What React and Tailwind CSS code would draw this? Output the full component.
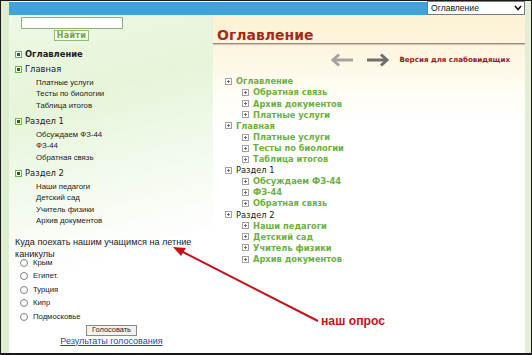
import React from "react";

const sans = { fontFamily: '"DejaVu Sans", Verdana, sans-serif' };
const arial = { fontFamily: '"Liberation Sans", Arial, sans-serif' };

function SideIcon() {
  return (
    <span className="inline-flex w-[7px] h-[7px] border border-[#6fb24a] bg-[#f4faef] items-center justify-center mr-[3px] shrink-0">
      <span className="w-[3px] h-[3px] bg-[#3c5a30]" />
    </span>
  );
}

function TreeIcon() {
  return (
    <svg width="7" height="7" viewBox="0 0 7 7" className="shrink-0 mr-[4px]">
      <rect x="0.5" y="0.5" width="6" height="6" fill="#fff" stroke="#a0a0a0" />
      <path d="M2 3.5H5M3.5 2V5" stroke="#707070" strokeWidth="1" />
    </svg>
  );
}

function Arrow({ dir, color }) {
  return (
    <svg width="24" height="14" viewBox="0 0 24 14">
      {dir === "left" ? (
        <g stroke={color} strokeWidth="3" fill="none" strokeLinecap="butt" strokeLinejoin="miter">
          <path d="M3 7H23" />
          <path d="M9 1.5L3 7L9 12.5" />
        </g>
      ) : (
        <g stroke={color} strokeWidth="3" fill="none" strokeLinecap="butt" strokeLinejoin="miter">
          <path d="M1 7H21" />
          <path d="M15 1.5L21 7L15 12.5" />
        </g>
      )}
    </svg>
  );
}

const sideMenu = [
  { title: "Главная", items: ["Платные услуги", "Тесты по биологии", "Таблица итогов"] },
  { title: "Раздел 1", items: ["Обсуждаем ФЗ-44", "ФЗ-44", "Обратная связь"] },
  { title: "Раздел 2", items: ["Наши педагоги", "Детский сад", "Учитель физики", "Архив документов"] },
];

const tree = [
  { t: "Оглавление", l: 0, g: true },
  { t: "Обратная связь", l: 1, g: true },
  { t: "Архив документов", l: 1, g: true },
  { t: "Платные услуги", l: 1, g: true },
  { t: "Главная", l: 0, g: true },
  { t: "Платные услуги", l: 1, g: true },
  { t: "Тесты по биологии", l: 1, g: true },
  { t: "Таблица итогов", l: 1, g: true },
  { t: "Раздел 1", l: 0, g: false },
  { t: "Обсуждаем ФЗ-44", l: 1, g: true },
  { t: "ФЗ-44", l: 1, g: true },
  { t: "Обратная связь", l: 1, g: true },
  { t: "Раздел 2", l: 0, g: false },
  { t: "Наши педагоги", l: 1, g: true },
  { t: "Детский сад", l: 1, g: true },
  { t: "Учитель физики", l: 1, g: true },
  { t: "Архив документов", l: 1, g: true },
];

const options = ["Крым", "Египет.", "Турция", "Кипр", "Подмосковье"];

export default function App() {
  return (
    <div className="relative w-[532px] h-[355px] overflow-hidden bg-white border-t border-l border-r border-[#1a1a1a] border-b-2 flex" style={sans}>
      {/* left strip */}
      <div className="w-[8px] h-full bg-[#dcefcf]" />

      {/* main */}
      <div className="flex-1 flex flex-col min-w-0">
        {/* top bar */}
        <div className="h-[14px] flex items-start">
          <div className="mt-[1px] h-[13px] flex-1 bg-[#3fa2df] flex justify-end items-start">
            <div className="-mt-[1px] w-[98px] h-[14px] bg-white border border-[#7a7a7a] flex items-center justify-between pl-[3px] pr-[2px]" style={arial}>
              <span className="text-[8.6px] leading-none text-[#111]">Оглавление</span>
              <svg width="8" height="6" viewBox="0 0 8 6">
                <path d="M1 1L4 4.5L7 1" stroke="#111" strokeWidth="1.6" fill="none" />
              </svg>
            </div>
          </div>
        </div>

        <div className="flex flex-1 min-h-0">
          {/* sidebar */}
          <div className="w-[204px] h-full bg-[linear-gradient(165deg,#eef8e5_0%,#e6f5da_25%,#ffffff_70%)] flex flex-col">
            <div className="pl-[7px] pt-[2px] w-[118px] flex flex-col items-center">
              <div className="w-[102px] h-[12px] bg-white border border-[#8fb07a]" />
              <div className="mt-[1px] h-[11px] px-[2px] border border-[#8cc06a] bg-[#f7fbf2] flex items-center">
                <span className="text-[8px] leading-none font-bold text-[#6aa84a] tracking-[0.3px]">Найти</span>
              </div>
            </div>

            <div className="pl-[6px] mt-[6px] flex flex-col">
              <div className="h-[14px] flex items-center">
                <SideIcon />
                <span className="text-[8.4px] font-bold text-[#1a1a1a] leading-none">Оглавление</span>
              </div>
              {sideMenu.map((s, i) => (
                <div key={i} className="mt-[1px] mb-[1.5px]">
                  <div className="h-[14px] flex items-center">
                    <SideIcon />
                    <span className="text-[8.4px] text-[#1a1a1a] leading-none">{s.title}</span>
                  </div>
                  <div className="pt-[1px] pl-[21px] flex flex-col" style={arial}>
                    {s.items.map((it, j) => (
                      <div key={j} className="h-[11.5px] flex items-center text-[7.8px] text-[#222] leading-none">
                        {it}
                      </div>
                    ))}
                  </div>
                </div>
              ))}
            </div>

            {/* poll */}
            <div className="mt-[7px] pl-[6px] pr-[14px]" style={arial}>
              <div className="text-[9.1px] leading-[12px] text-[#222]">
                Куда поехать нашим учащимся на летние каникулы
              </div>
              <div className="-mt-[3.5px] pl-[5px] flex flex-col">
                {options.map((o, i) => (
                  <div key={i} className="h-[13.5px] flex items-center">
                    <span className="w-[8px] h-[8px] rounded-full border border-[#808080] bg-white mr-[5px]" />
                    <span className="text-[7.7px] text-[#222] leading-none">{o}</span>
                  </div>
                ))}
              </div>
              <div className="mt-[1px] flex flex-col items-center w-[193px]">
                <div className="w-[51px] h-[11px] border border-[#8a8a8a] bg-[#f2f2f2] flex items-center justify-center">
                  <span className="text-[7.4px] leading-none text-[#222]">Голосовать</span>
                </div>
                <span className="text-[9px] leading-[10px] text-[#2b3fa8] underline">Результаты голосования</span>
              </div>
            </div>
          </div>

          {/* content */}
          <div className="flex-1 min-w-0 h-full bg-[linear-gradient(to_bottom,#fcf1d2_0px,#fdf6e2_40px,#fffdf6_80px,#ffffff_110px)] flex flex-col">
            <div className="pt-[12px] pl-[4px] border-b border-[#9c8576] shadow-[0_1px_1px_#d6c6b6]">
              <div className="text-[14px] leading-[16px] font-bold text-[#a52a1c]">Оглавление</div>
            </div>
            <div className="mt-[9px] h-[14px] flex items-center justify-end pr-[15px]">
              <Arrow dir="left" color="#a3a3a3" />
              <span className="w-[12px]" />
              <Arrow dir="right" color="#6e6e6e" />
              <span className="w-[9px]" />
              <span className="text-[7.1px] font-bold text-[#8b1c1c] leading-none">Версия для слабовидящих</span>
            </div>
            <div className="mt-[9px] flex flex-col">
              {tree.map((r, i) => (
                <div key={i} className={`h-[11.1px] flex items-center ${r.l === 0 ? "pl-[12px]" : "pl-[29px]"}`}>
                  <TreeIcon />
                  <span className={`text-[8.3px] leading-none ${r.g ? "font-bold text-[#6bb043]" : "text-[#1a1a1a]"}`}>{r.t}</span>
                </div>
              ))}
            </div>
          </div>
        </div>
      </div>

      {/* right strip */}
      <div className="w-[6px] h-full bg-[#e2efd6]" />

      {/* annotation overlay */}
      <svg className="absolute left-[-1px] top-[-1px] pointer-events-none" width="532" height="355" viewBox="0 0 532 355">
        <path d="M318 321L181 251" stroke="#c4121c" strokeWidth="2" fill="none" />
        <path d="M173 247L186 248L181 256Z" fill="#c4121c" />
      </svg>
      <span className="absolute left-[320px] top-[314px] text-[12.2px] leading-none font-bold text-[#c4121c]" style={arial}>наш опрос</span>
    </div>
  );
}
